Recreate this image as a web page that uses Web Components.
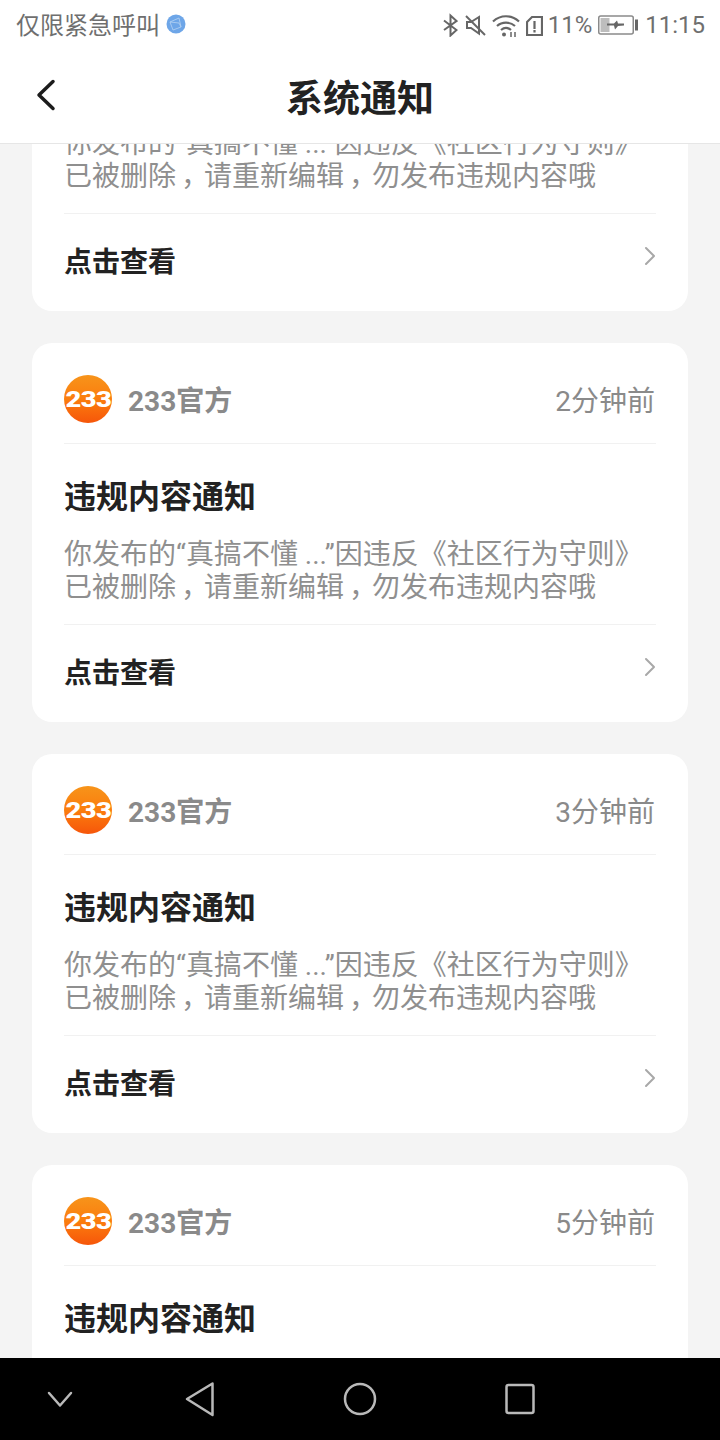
<!DOCTYPE html>
<html lang="zh-CN">
<head>
<meta charset="utf-8">
<title>系统通知</title>
<style>
    html, body {
        margin: 0;
        height: 100%;
        background: #f4f4f4;
    }
    body {
        display: flex;
        flex-direction: column;
        height: 1440px;
        overflow: hidden;
        font-family: Roboto, "Noto Sans CJK SC", sans-serif;
    }
    /* la virgola nel riferimento sta piu' al centro della cella */
    .comma { margin-left: 5px; letter-spacing: -5px; }
</style>
</head>
<body>
<status-bar></status-bar>
<page-header>系统通知</page-header>
<notice-list>
    <notice-card time="1分钟前"><span slot="title">违规内容通知</span>你发布的“真搞不懂 ...”因违反《社区行为守则》<br>已被删除<span class="comma">，</span>请重新编辑<span class="comma">，</span>勿发布违规内容哦</notice-card>
    <notice-card time="2分钟前"><span slot="title">违规内容通知</span>你发布的“真搞不懂 ...”因违反《社区行为守则》<br>已被删除<span class="comma">，</span>请重新编辑<span class="comma">，</span>勿发布违规内容哦</notice-card>
    <notice-card time="3分钟前"><span slot="title">违规内容通知</span>你发布的“真搞不懂 ...”因违反《社区行为守则》<br>已被删除<span class="comma">，</span>请重新编辑<span class="comma">，</span>勿发布违规内容哦</notice-card>
    <notice-card time="5分钟前"><span slot="title">违规内容通知</span>你发布的“真搞不懂 ...”因违反《社区行为守则》<br>已被删除<span class="comma">，</span>请重新编辑<span class="comma">，</span>勿发布违规内容哦</notice-card>
</notice-list>
<nav-bar></nav-bar>

<script>
// Barra di stato in alto
class StatusBar extends HTMLElement {
    constructor() {
        super();
        this.attachShadow({ mode: "open" }).innerHTML = `
            <style>
                :host {
                    display: flex;
                    flex: none;
                    align-items: center;
                    justify-content: space-between;
                    height: 50px;
                    padding: 0 15px 0 16px;
                    background: #fff;
                    color: #6f6f6f;
                    font-size: 24px;
                }
                .left, .right { display: flex; align-items: center; }
                .left { gap: 6px; padding-bottom: 3px; }
                .right svg { display: block; }
                .pct { margin: 0 6px 0 5px; }
                .clock { margin-left: 7px; }
            </style>
            <div class="left">
                <span>仅限紧急呼叫</span>
                <svg width="20" height="20" viewBox="0 0 20 20">
                    <circle cx="10" cy="10" r="9.500" fill="#6ea6e8"/>
                    <path d="M4 8l9-4 2 9-8 3zM4 8l9 1 2 4" fill="none" stroke="#b5d2f3" stroke-width="0.800"/>
                </svg>
            </div>
            <div class="right">
                <svg width="15" height="24" viewBox="0 0 15 24" fill="none" stroke="#666" stroke-width="2">
                    <path d="M1 7.500l12.500 9.500L7.500 22.500V2.500l6 5.500L1 17"/>
                </svg>
                <svg width="22" height="24" viewBox="0 0 22 24" fill="none" stroke="#666" stroke-width="2" style="margin-left:7px">
                    <path d="M2 9v6h4l8 5.500V4L6 9z"/><path d="M1 3l19 19"/>
                </svg>
                <svg width="28" height="24" viewBox="0 0 28 24" fill="none" stroke="#666" stroke-width="2.200" style="margin-left:5px">
                    <path d="M1 8.500c7.500-7 18.500-7 26 0M5 13c5-4.500 13-4.500 18 0M9 17c3-2.500 7-2.500 10 0"/>
                    <circle cx="12" cy="21.500" r="2" fill="#666" stroke="none"/>
                    <path d="M19 19v5M23 19v5" stroke-width="1.500"/>
                </svg>
                <svg width="17" height="24" viewBox="0 0 17 24" fill="none" stroke="#666" stroke-width="2.200" style="margin-left:6px">
                    <path d="M6 4h10v18H1V9z"/><path d="M8.500 8v8M8.500 17v2.500"/>
                </svg>
                <span class="pct">11%</span>
                <svg width="40" height="20" viewBox="0 0 40 20" fill="none">
                    <rect x="0.750" y="1" width="34.500" height="18" rx="2" stroke="#8a8a8a" stroke-width="1.500"/>
                    <rect x="2.500" y="3" width="9" height="14" fill="#bdbdbd"/>
                    <path d="M9 8.500h7l3-3 1 3h6v2l-6 .5-3 3.500-1-4H9z" fill="#666"/>
                    <rect x="37" y="4.500" width="3" height="11" fill="#666"/>
                </svg>
                <span class="clock">11:15</span>
            </div>
        `;
    }
}

// Intestazione con freccia indietro e titolo
class PageHeader extends HTMLElement {
    constructor() {
        super();
        this.attachShadow({ mode: "open" }).innerHTML = `
            <style>
                :host {
                    display: flex;
                    flex: none;
                    position: relative;
                    z-index: 1;
                    align-items: center;
                    justify-content: center;
                    height: 94px;
                    box-sizing: border-box;
                    padding-bottom: 2px;
                    background: #fff;
                    border-bottom: 1px solid #e6e6e6;
                    color: #222;
                    font-size: 37px;
                    font-weight: 700;
                }
                svg {
                    position: absolute;
                    left: 32px;
                    top: 26px;
                }
            </style>
            <svg width="28" height="38" viewBox="0 0 28 38" fill="none" stroke="#1c1c1c" stroke-width="3.500" stroke-linecap="round" stroke-linejoin="round">
                <path d="M21 5.500L7 19l14 13.500"/>
            </svg>
            <slot></slot>
        `;
    }
}

// Contenitore scorrevole, la prima card e' gia' in parte fuori schermo
class NoticeList extends HTMLElement {
    constructor() {
        super();
        this.attachShadow({ mode: "open" }).innerHTML = `
            <style>
                :host {
                    display: block;
                    flex: 1;
                    min-height: 0;
                    overflow: hidden;
                    background: #f4f4f4;
                }
                .inner {
                    display: flex;
                    flex-direction: column;
                    gap: 32px;
                    padding: 0 32px;
                    margin-top: -212px;
                }
            </style>
            <div class="inner"><slot></slot></div>
        `;
    }
}

class BrandLogo extends HTMLElement {
    constructor() {
        super();
        this.attachShadow({ mode: "open" }).innerHTML = `
            <style>
                :host {
                    display: flex;
                    flex: none;
                    align-items: center;
                    justify-content: center;
                    width: 48px;
                    height: 48px;
                    border-radius: 50%;
                    background: linear-gradient(180deg, #f7941a 0%, #fb7d0e 50%, #f6560a 100%);
                    color: #fff;
                }
                span {
                    display: block;
                    font-size: 22px;
                    font-weight: 900;
                    letter-spacing: -0.5px;
                    transform: scaleX(1.24);
                }
            </style>
            <span>233</span>
        `;
    }
}

class NoticeCard extends HTMLElement {
    static get observedAttributes() {
        return ["time"];
    }

    constructor() {
        super();
        this.attachShadow({ mode: "open" }).innerHTML = `
            <style>
                :host {
                    display: block;
                    flex: none;
                    height: 379px;
                    box-sizing: border-box;
                    padding: 0 32px;
                    background: #fff;
                    border-radius: 20px;
                }
                .head {
                    display: flex;
                    align-items: center;
                    gap: 16px;
                    padding-top: 32px;
                    padding-bottom: 20px;
                    height: 48px;
                    border-bottom: 1px solid #f1f1f1;
                    color: #8a8a8a;
                    font-size: 28px;
                }
                .name { font-weight: 700; }
                .time { margin-left: auto; padding-right: 1px; }
                .title {
                    padding-top: 33px;
                    height: 45px;
                    line-height: 40px;
                    color: #222;
                    font-size: 32px;
                    font-weight: 700;
                }
                .body {
                    padding-top: 16px;
                    padding-bottom: 20px;
                    border-bottom: 1px solid #f1f1f1;
                    color: #8f8f8f;
                    font-size: 28px;
                    line-height: 33px;
                    white-space: nowrap;
                }
                .more {
                    display: flex;
                    align-items: center;
                    justify-content: space-between;
                    height: 91px;
                    padding-bottom: 4px;
                    color: #222;
                    font-size: 28px;
                    font-weight: 700;
                }
                .more svg { margin-top: -7px; }
            </style>
            <div class="head">
                <brand-logo></brand-logo>
                <span class="name">233官方</span>
                <span class="time"></span>
            </div>
            <div class="title"><slot name="title"></slot></div>
            <div class="body"><slot></slot></div>
            <div class="more">
                <span>点击查看</span>
                <svg width="12" height="20" viewBox="0 0 12 20" fill="none" stroke="#a8a8a8" stroke-width="2" stroke-linecap="round" stroke-linejoin="round">
                    <path d="M2 2l8 8-8 8"/>
                </svg>
            </div>
        `;
    }

    attributeChangedCallback(name, oldValue, newValue) {
        this.shadowRoot.querySelector(".time").textContent = newValue || "";
    }
}

// Barra di navigazione Android in basso
class NavBar extends HTMLElement {
    constructor() {
        super();
        this.attachShadow({ mode: "open" }).innerHTML = `
            <style>
                :host {
                    display: block;
                    flex: none;
                    position: relative;
                    z-index: 1;
                    height: 82px;
                    background: #000;
                }
                svg { display: block; }
            </style>
            <svg width="720" height="82" viewBox="0 0 720 82" fill="none" stroke="#b9b9b9" stroke-width="2.500" stroke-linejoin="round" stroke-linecap="round">
                <path d="M49 35l11 12.500L71 35"/>
                <path d="M212.500 25.500L187 41l25.500 16z"/>
                <circle cx="360" cy="41" r="15"/>
                <rect x="506.500" y="27" width="27" height="28" rx="2"/>
            </svg>
        `;
    }
}

customElements.define("status-bar", StatusBar);
customElements.define("page-header", PageHeader);
customElements.define("notice-list", NoticeList);
customElements.define("brand-logo", BrandLogo);
customElements.define("notice-card", NoticeCard);
customElements.define("nav-bar", NavBar);
</script>
</body>
</html>
